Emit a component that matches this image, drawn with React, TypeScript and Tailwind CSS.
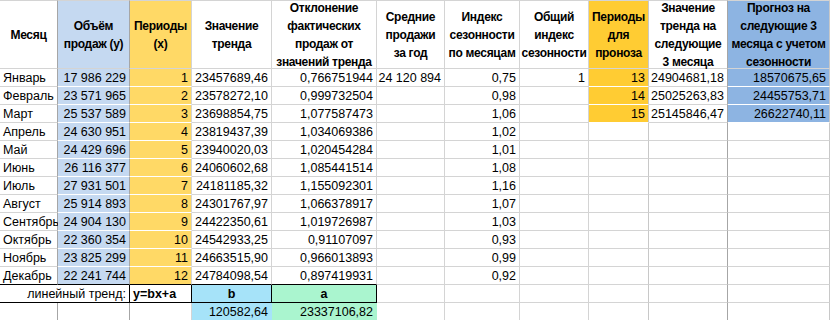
import React from "react";

const months = ["Январь", "Февраль", "Март", "Апрель", "Май", "Июнь", "Июль", "Август", "Сентябрь", "Октябрь", "Ноябрь", "Декабрь"];
const sales = ["17 986 229", "23 571 965", "25 537 589", "24 630 951", "24 429 696", "26 116 377", "27 931 501", "25 914 893", "24 904 130", "22 360 354", "23 825 299", "22 241 744"];
const trend = ["23457689,46", "23578272,10", "23698854,75", "23819437,39", "23940020,03", "24060602,68", "24181185,32", "24301767,97", "24422350,61", "24542933,25", "24663515,90", "24784098,54"];
const deviation = ["0,766751944", "0,999732504", "1,077587473", "1,034069386", "1,020454284", "1,085441514", "1,155092301", "1,066378917", "1,019726987", "0,91107097", "0,966013893", "0,897419931"];
const seasonIdx = ["0,75", "0,98", "1,06", "1,02", "1,01", "1,08", "1,16", "1,07", "1,03", "0,93", "0,99", "0,92"];
const forecast = [
  { period: "13", trend: "24904681,18", value: "18570675,65" },
  { period: "14", trend: "25025263,83", value: "24455753,71" },
  { period: "15", trend: "25145846,47", value: "26622740,11" },
];

const headers: { lines: string[]; bg: string }[] = [
  { lines: ["Месяц"], bg: "bg-white" },
  { lines: ["Объём", "продаж (y)"], bg: "bg-[#c5d9f1]" },
  { lines: ["Периоды", "(x)"], bg: "bg-[#ffd966]" },
  { lines: ["Значение", "тренда"], bg: "bg-white" },
  { lines: ["Отклонение", "фактических", "продаж от", "значений тренда"], bg: "bg-white" },
  { lines: ["Средние", "продажи", "за год"], bg: "bg-white" },
  { lines: ["Индекс", "сезонности", "по месяцам"], bg: "bg-white" },
  { lines: ["Общий", "индекс", "сезонности"], bg: "bg-white" },
  { lines: ["Периоды", "для", "проноза"], bg: "bg-[#ffcc33]" },
  { lines: ["Значение", "тренда на", "следующие", "3 месяца"], bg: "bg-white" },
  { lines: ["Прогноз на", "следующие 3", "месяца с учетом", "сезонности"], bg: "bg-[#8db4e2]" },
];

// right border colour per column
const rightBorder = [
  "border-r-[#a6a6a6]",
  "border-r-[#a6a6a6]",
  "border-r-[#d4d4d4]",
  "border-r-[#d4d4d4]",
  "border-r-[#d4d4d4]",
  "border-r-[#d4d4d4]",
  "border-r-[#d4d4d4]",
  "border-r-[#d4d4d4]",
  "border-r-[#c8c8c8]",
  "border-r-[#a6a6a6]",
  "border-r-[#c8c8c8]",
];

type CellProps = {
  col: number;
  bg?: string;
  bottom?: string;
  align?: "left" | "right" | "center";
  bold?: boolean;
  span?: string;
  right?: string;
  children?: React.ReactNode;
};

const Cell = ({ col, bg = "bg-white", bottom = "border-b-[#d4d4d4]", align = "right", bold, span = "", right, children }: CellProps) => {
  const alignCls = align === "left" ? "justify-start pl-[3px]" : align === "center" ? "justify-center" : "justify-end pr-[3px]";
  return (
    <div
      className={`flex items-center overflow-visible whitespace-nowrap border-r border-b ${right ?? rightBorder[col]} ${bottom} ${bg} ${alignCls} ${bold ? "font-bold" : ""} ${span}`}
    >
      {children}
    </div>
  );
};

export default function App() {
  return (
    <div className="w-[830px] h-[320px] overflow-hidden bg-white text-black font-['Liberation_Sans',Arial,sans-serif] text-[12.5px] leading-[18px]">
      <div className="grid grid-cols-[58px_72px_62px_80px_105px_68px_75px_69px_60px_79px_102px] grid-rows-[69px_repeat(14,18px)]">
        {headers.map((h, i) => (
          <div
            key={i}
            className={`flex flex-col items-center justify-center overflow-visible whitespace-nowrap text-center font-bold text-[12px] tracking-[-0.3px] border-t border-t-[#d4d4d4] border-r border-b border-b-[#d4d4d4] ${rightBorder[i]} ${h.bg}`}
          >
            {h.lines.map((l) => (
              <div key={l} className="leading-[18px]">{l}</div>
            ))}
          </div>
        ))}

        {months.map((m, r) => {
          const last = r === 11;
          const blackB = "border-b-black";
          const f = forecast[r];
          return (
            <React.Fragment key={m}>
              <Cell col={0} align="left" bottom={last ? blackB : undefined}>{m}</Cell>
              <Cell col={1} bg="bg-[#c5d9f1]" bottom={last ? blackB : "border-b-white"}>{sales[r]}</Cell>
              <Cell col={2} bg="bg-[#ffd966]" bottom={last ? blackB : "border-b-white"}>{r + 1}</Cell>
              <Cell col={3} bottom={last ? blackB : undefined}>{trend[r]}</Cell>
              <Cell col={4} bottom={last ? blackB : undefined}>{deviation[r]}</Cell>
              <Cell col={5}>{r === 0 ? "24 120 894" : ""}</Cell>
              <Cell col={6}>{seasonIdx[r]}</Cell>
              <Cell col={7}>{r === 0 ? "1" : ""}</Cell>
              <Cell col={8} bg={f ? "bg-[#ffcc33]" : "bg-white"} bottom={f ? "border-b-white" : undefined}>{f?.period}</Cell>
              <Cell col={9}>{f?.trend}</Cell>
              <Cell col={10} bg={f ? "bg-[#8db4e2]" : "bg-white"} bottom={f ? "border-b-white" : undefined}>{f?.value}</Cell>
            </React.Fragment>
          );
        })}

        {/* linear trend row */}
        <Cell col={0} span="col-span-2" right="border-r-black" bottom="border-b-black">линейный тренд:</Cell>
        <Cell col={2} align="left" bold right="border-r-black" bottom="border-b-black">y=bx+a</Cell>
        <Cell col={3} align="center" bold bg="bg-[#a6e3f9]" right="border-r-black" bottom="border-b-black">b</Cell>
        <Cell col={4} align="center" bold bg="bg-[#aaf5cf]" right="border-r-black" bottom="border-b-black">a</Cell>
        {[5, 6, 7, 8, 9, 10].map((c) => (
          <Cell key={c} col={c} />
        ))}

        {/* coefficients */}
        <Cell col={0} />
        <Cell col={1} />
        <Cell col={2} />
        <Cell col={3} bg="bg-[#a6e3f9]" right="border-r-[#a6e3f9]">120582,64</Cell>
        <Cell col={4} bg="bg-[#aaf5cf]" right="border-r-[#aaf5cf]">23337106,82</Cell>
        {[5, 6, 7, 8, 9, 10].map((c) => (
          <Cell key={c} col={c} />
        ))}
      </div>
    </div>
  );
}
